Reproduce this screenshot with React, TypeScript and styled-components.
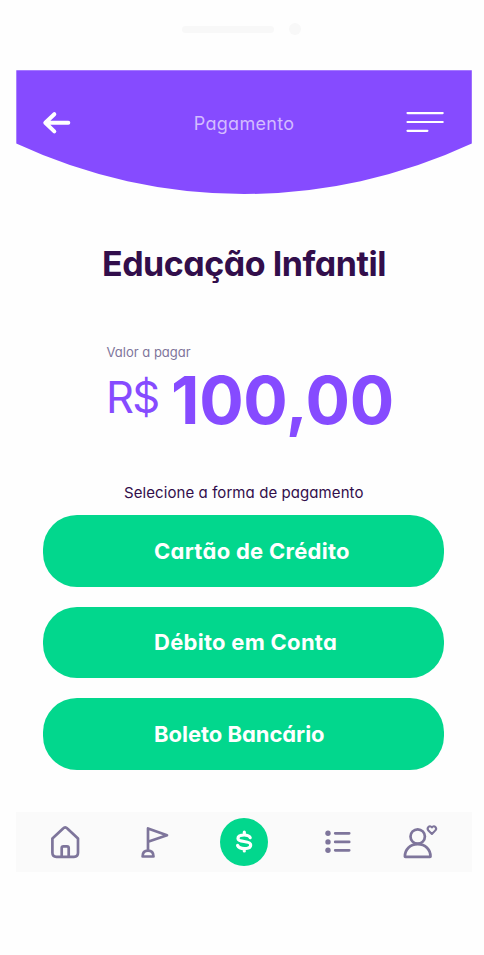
import React from "react";
import styled, { createGlobalStyle } from "styled-components";

const color = {
  purple: "#864bff",
  green: "#02d78d",
  ink: "#320e4b",
  muted: "#7e759b",
  nav: "#fafafa",
};

const GlobalStyle = createGlobalStyle`
  *, *::before, *::after { box-sizing: border-box; }
  body {
    margin: 0;
    background: #fefefe;
    font-family: Inter, "Open Sans", sans-serif;
    font-feature-settings: "cv11" 1;
  }
`;

const Phone = styled.div`
  width: 484px;
  height: 955px;
  padding-left: 16px;
  display: flex;
  flex-direction: column;
  overflow: hidden;
`;

const Notch = styled.div`
  height: 70px;
  padding: 23px 0 0 166px;
  display: flex;
  align-items: flex-start;
  gap: 15px;
`;

const Speaker = styled.span`
  width: 92px;
  height: 7px;
  margin-top: 3px;
  border-radius: 4px;
  background: #f8f8f8;
`;

const Camera = styled.span`
  width: 12px;
  height: 12px;
  border-radius: 50%;
  background: #f8f8f8;
`;

const Header = styled.header`
  width: 456px;
  height: 124px;
  padding: 40px 28px 0 26px;
  display: flex;
  justify-content: space-between;
  align-items: flex-start;
  background: ${color.purple};
  clip-path: path("M0.3 0.2H455.8V73.6A540 540 0 0 1 0.3 73.6Z");
`;

const HeaderTitle = styled.h1`
  margin: 0 0 0 10px;
  font-size: 18px;
  line-height: 27px;
  font-weight: 400;
  letter-spacing: 0.3px;
  color: #d3bcff;
`;

const IconButton = styled.button`
  padding: 0;
  border: 0;
  background: none;
  display: flex;
`;

const Content = styled.main`
  width: 456px;
  height: 618px;
  display: flex;
  flex-direction: column;
`;

const Course = styled.h2`
  margin: 49px 0 0 86px;
  font-size: 34px;
  line-height: 42px;
  font-weight: 700;
  letter-spacing: -0.48px;
  color: ${color.ink};
  white-space: nowrap;
`;

const AmountLabel = styled.p`
  margin: 57px 0 0 90.5px;
  font-size: 13px;
  line-height: 20px;
  color: ${color.muted};
`;

const Amount = styled.div`
  height: 76px;
  margin-left: 90px;
  display: flex;
  color: ${color.purple};
  white-space: nowrap;
`;

const Currency = styled.span`
  width: 65px;
  font-size: 43.5px;
  line-height: 71px;
  letter-spacing: -1.8px;
`;

const Value = styled.strong`
  font-size: 66px;
  line-height: 77px;
  font-weight: 700;
  letter-spacing: -0.3px;
`;

const Prompt = styled.p`
  margin: 44px 0 0 108px;
  font-size: 15px;
  line-height: 22px;
  letter-spacing: 0.08px;
  color: ${color.ink};
  white-space: nowrap;
`;

const Methods = styled.div`
  margin: 11.2px 0 0 27px;
  display: flex;
  flex-direction: column;
  gap: 19.8px;
`;

const Method = styled.button<{ $spacing: number }>`
  width: 401px;
  height: 71.6px;
  padding: 0 0 0 111px;
  border: 0;
  border-radius: 34px;
  background: ${color.green};
  color: #fff;
  font-family: inherit;
  font-feature-settings: inherit;
  font-size: 22px;
  font-weight: 700;
  text-align: left;
  letter-spacing: ${(p) => p.$spacing}px;
  white-space: nowrap;
`;

const Nav = styled.nav`
  width: 456px;
  height: 60px;
  padding-left: 34px;
  display: grid;
  grid-template-columns: 88px 81.7px 103.5px 77.8px 38px;
  align-items: center;
  background: ${color.nav};
`;

const NavItem = styled.button`
  height: 60px;
  padding: 0;
  border: 0;
  background: none;
  display: flex;
  align-items: center;
  color: ${color.muted};
`;

const PayBadge = styled.span`
  width: 48px;
  height: 48px;
  border-radius: 50%;
  background: ${color.green};
  color: #fff;
  display: flex;
  align-items: center;
  justify-content: center;
`;

const Icon = styled.svg`
  display: block;
  flex: none;
  fill: none;
  stroke: currentColor;
  stroke-width: 2.7;
  stroke-linecap: round;
  stroke-linejoin: round;
`;

const WhiteIcon = styled(Icon)`
  color: #fff;
`;

const methods = [
  { label: "Cartão de Crédito", spacing: 0.28 },
  { label: "Débito em Conta", spacing: 0.28 },
  { label: "Boleto Bancário", spacing: -0.04 },
];

export default function App() {
  return (
    <>
      <GlobalStyle />
      <Phone>
        <Notch>
          <Speaker />
          <Camera />
        </Notch>
        <Header>
          <IconButton aria-label="Voltar">
            <WhiteIcon width="30" height="26" viewBox="0 0 30 26">
              <path d="M12.3 4.2 3.3 12.8 12.3 21.4M4.2 12.8H26.3" strokeWidth="4" />
            </WhiteIcon>
          </IconButton>
          <HeaderTitle>Pagamento</HeaderTitle>
          <IconButton aria-label="Menu">
            <WhiteIcon width="38" height="24" viewBox="0 0 38 24">
              <path d="M1.5 3.1H36.7M1.5 12H36.7M1.5 20.8H21.4" strokeWidth="2.2" />
            </WhiteIcon>
          </IconButton>
        </Header>
        <Content>
          <Course>Educação Infantil</Course>
          <AmountLabel>Valor a pagar</AmountLabel>
          <Amount>
            <Currency>R$</Currency>
            <Value>100,00</Value>
          </Amount>
          <Prompt>Selecione a forma de pagamento</Prompt>
          <Methods>
            {methods.map((m) => (
              <Method key={m.label} $spacing={m.spacing}>
                {m.label}
              </Method>
            ))}
          </Methods>
        </Content>
        <Nav>
          <NavItem aria-label="Início">
            <Icon width="32" height="60" viewBox="0 0 32 60">
              <path d="M2.4 26.5 13.1 16.4Q15.2 14.2 17.3 16.4L28 26.5V40.8Q28 44.8 24 44.8H6.4Q2.4 44.8 2.4 40.8Z" />
              <path d="M11.7 44V36Q11.7 34.3 13.4 34.3H17Q18.7 34.3 18.7 36V44" />
            </Icon>
          </NavItem>
          <NavItem aria-label="Metas">
            <Icon width="32" height="60" viewBox="0 0 32 60">
              <path d="M10 38V16.4L29 23.3 10 29.8M4.6 44.5Q4.6 38.7 10 38.7T15.5 44.5Z" />
            </Icon>
          </NavItem>
          <NavItem aria-label="Pagar">
            <PayBadge>
              <Icon width="48" height="48" viewBox="0 0 48 48">
                <path
                  d="M30.2 19.7Q29 17 24.2 17C20 17 18 18.6 18 20.5C18 25 30.7 22 30.7 27C30.7 29.1 28.3 30.6 24.3 30.6Q19 30.6 17.6 27.5M24.3 14.2V17M24.3 30.6V33"
                  strokeWidth="3.2"
                />
              </Icon>
            </PayBadge>
          </NavItem>
          <NavItem aria-label="Extrato">
            <Icon width="30" height="60" viewBox="0 0 30 60">
              <g fill="currentColor" stroke="none">
                <circle cx="5" cy="21.3" r="2.7" />
                <circle cx="5" cy="29.9" r="2.7" />
                <circle cx="5" cy="38.3" r="2.7" />
              </g>
              <path d="M12.2 21.3H26.2M12.2 29.9H26.2M12.2 38.3H26.2" />
            </Icon>
          </NavItem>
          <NavItem aria-label="Perfil">
            <Icon width="38" height="60" viewBox="0 0 38 60">
              <circle cx="16.7" cy="24.5" r="7.2" />
              <path d="M3.9 44.5C3.9 37.5 9 32.2 16.7 32.2S29.5 37.5 29.5 44.5Q29.5 44.8 29 44.8H4.4Q3.9 44.8 3.9 44.5Z" />
              <path d="M30.9 22 27.4 18.4C25.4 16.3 28.4 12.3 30.9 15.4C33.4 12.3 36.4 16.3 34.4 18.4Z" strokeWidth="2.1" />
            </Icon>
          </NavItem>
        </Nav>
      </Phone>
    </>
  );
}
